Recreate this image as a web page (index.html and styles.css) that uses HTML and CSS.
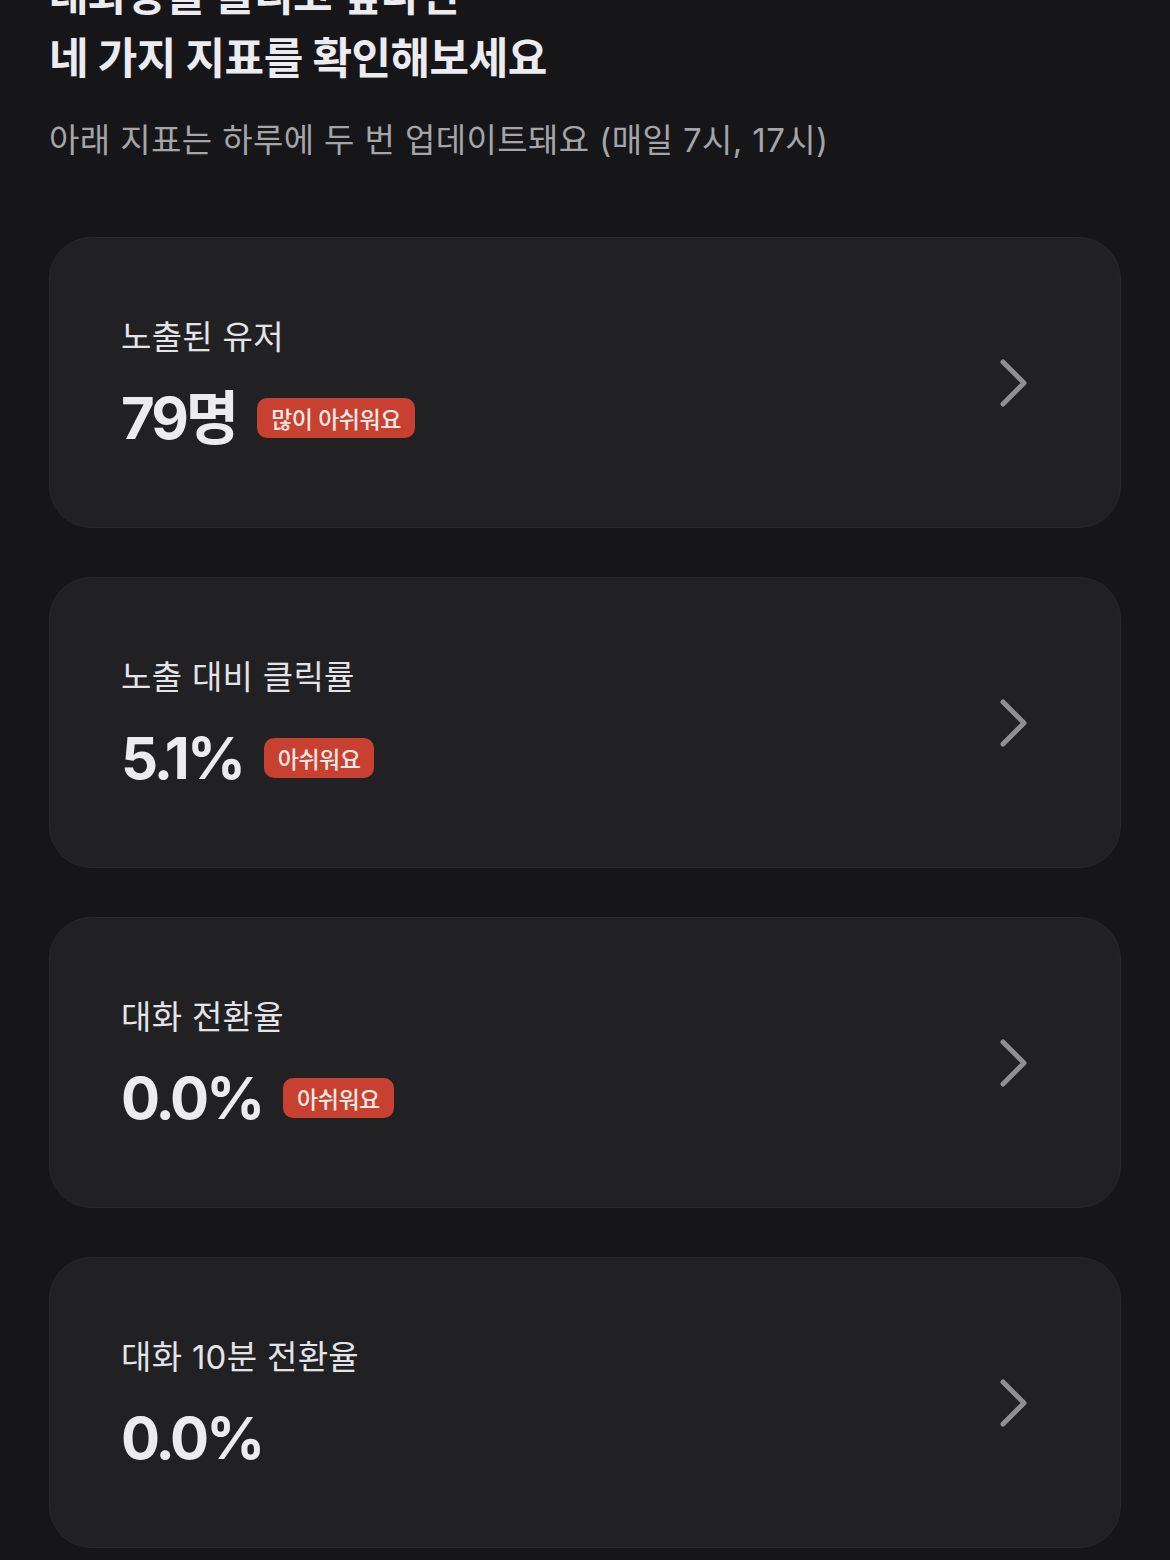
FILE: index.html
```html
<!DOCTYPE html>
<html lang="ko">
<head>
<meta charset="utf-8">
<link rel="stylesheet" href="styles.css">
</head>
<body>
<main class="page">
  <h1 class="title">대화량을 늘리고 싶다면<br>네 가지 지표를 확인해보세요</h1>
  <p class="subtitle">아래 지표는 하루에 두 번 업데이트돼요 (매일 7시, 17시)</p>

  <section class="cards">
    <a class="card">
      <div class="card-body">
        <div class="label">노출된 유저</div>
        <div class="value-row">
          <span class="value">79명</span>
          <span class="badge">많이 아쉬워요</span>
        </div>
      </div>
      <svg class="chevron" viewBox="0 0 30 50" width="30" height="50"><path d="M4 4 L25 25 L4 46" fill="none" stroke="currentColor" stroke-width="5" stroke-linecap="round" stroke-linejoin="round"/></svg>
    </a>
    <a class="card">
      <div class="card-body">
        <div class="label">노출 대비 클릭률</div>
        <div class="value-row">
          <span class="value">5.1%</span>
          <span class="badge">아쉬워요</span>
        </div>
      </div>
      <svg class="chevron" viewBox="0 0 30 50" width="30" height="50"><path d="M4 4 L25 25 L4 46" fill="none" stroke="currentColor" stroke-width="5" stroke-linecap="round" stroke-linejoin="round"/></svg>
    </a>
    <a class="card">
      <div class="card-body">
        <div class="label">대화 전환율</div>
        <div class="value-row">
          <span class="value">0.0%</span>
          <span class="badge">아쉬워요</span>
        </div>
      </div>
      <svg class="chevron" viewBox="0 0 30 50" width="30" height="50"><path d="M4 4 L25 25 L4 46" fill="none" stroke="currentColor" stroke-width="5" stroke-linecap="round" stroke-linejoin="round"/></svg>
    </a>
    <a class="card">
      <div class="card-body">
        <div class="label">대화 10분 전환율</div>
        <div class="value-row">
          <span class="value">0.0%</span>
        </div>
      </div>
      <svg class="chevron" viewBox="0 0 30 50" width="30" height="50"><path d="M4 4 L25 25 L4 46" fill="none" stroke="currentColor" stroke-width="5" stroke-linecap="round" stroke-linejoin="round"/></svg>
    </a>
  </section>
</main>
</body>
</html>
```

FILE: styles.css
```css
html, body {
  margin: 0;
  padding: 0;
  background: #161618;
}
body {
  font-family: Inter, "Noto Sans CJK KR", sans-serif;
  color: #e8e8ec;
  overflow: hidden;
  height: 1560px;
}
.page {
  padding: 0 49px;
}
.title {
  margin: -36px 0 0 0;
  font-size: 43px;
  line-height: 63px;
  font-weight: 700;
  letter-spacing: -0.5px;
  color: #ececf0;
}
.subtitle {
  margin: 26px 0 0 0;
  font-size: 33px;
  line-height: 48px;
  font-weight: 400;
  letter-spacing: 0.4px;
  color: #a4a4a9;
}
.cards {
  margin-top: 73px;
  display: flex;
  flex-direction: column;
  gap: 49px;
}
.card {
  display: flex;
  align-items: center;
  justify-content: space-between;
  height: 291px;
  box-sizing: border-box;
  padding: 0 91px 0 71px;
  background: #212124;
  border: 1px solid #28282b;
  border-radius: 42px;
}
.card-body {
  display: flex;
  flex-direction: column;
  gap: 24px;
  margin-top: 2px;
}
.label {
  font-size: 33px;
  line-height: 44px;
  font-weight: 400;
  letter-spacing: 0.3px;
  color: #e4e4e8;
}
.value-row {
  display: flex;
  align-items: center;
  gap: 21px;
  height: 70px;
}
.value {
  font-size: 58px;
  line-height: 70px;
  font-weight: 700;
  letter-spacing: -3px;
  color: #ececf0;
}
.badge {
  display: inline-flex;
  align-items: center;
  height: 40px;
  padding: 0 14px;
  border-radius: 10px;
  background: #c8402f;
  color: #f7e9e6;
  font-size: 23px;
  font-weight: 500;
  letter-spacing: -0.5px;
  margin-top: 1px;
}
.chevron {
  color: #8e8e93;
  flex: none;
}
```
